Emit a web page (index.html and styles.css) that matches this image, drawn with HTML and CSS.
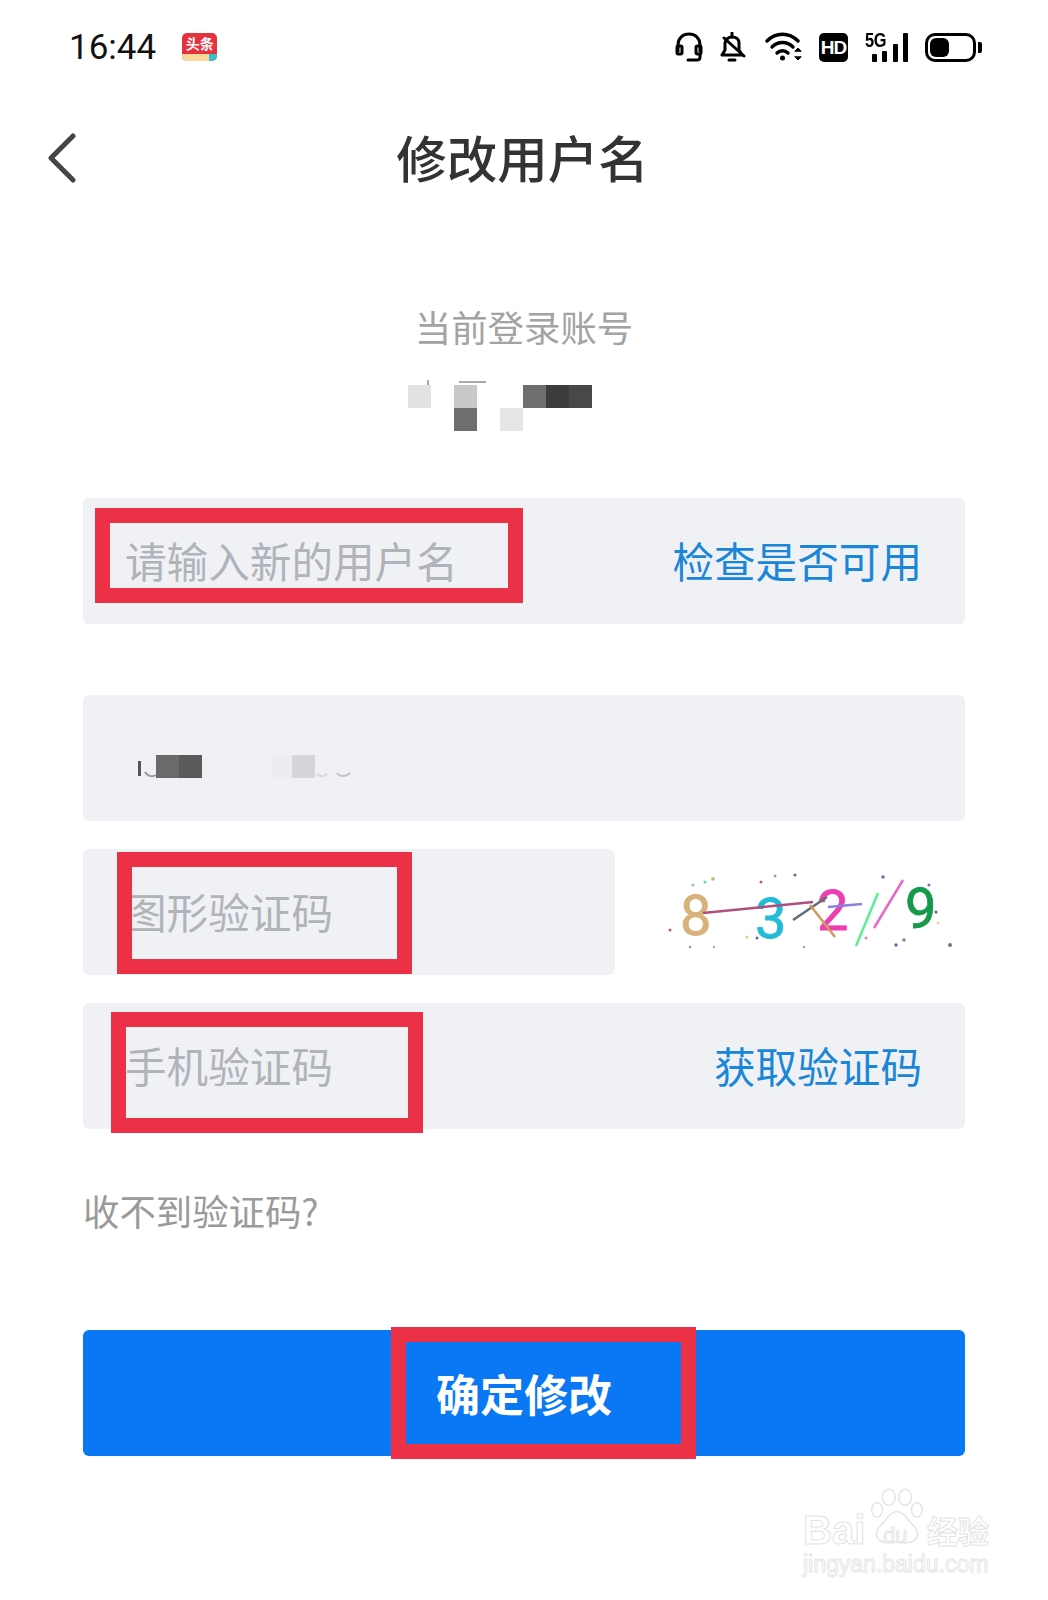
FILE: index.html
```html
<!DOCTYPE html>
<html lang="zh-CN">
<head>
  <meta charset="utf-8">
  <title>修改用户名</title>
  <link rel="stylesheet" href="styles.css">
</head>
<body>
  <!-- Status bar -->
  <div class="statusbar">
    <div class="status-left">
      <span class="time">16:44</span>
      <div class="app-badge">
        <span class="app-name">头条</span>
        <span class="app-strip"></span>
      </div>
    </div>
    <div class="status-icons">
      <svg width="28" height="30" viewBox="0 0 28 30" fill="none" stroke="#000" stroke-width="3">
        <path d="M3 20V13C3 6 8 2 14 2S25 6 25 13V20"/>
        <rect x="2" y="14" width="5" height="8" rx="1.5"/>
        <rect x="21" y="14" width="5" height="8" rx="1.5"/>
        <path d="M25 22V25C25 27 24 28 22 28H13" stroke-linecap="round"/>
      </svg>
      <svg width="28" height="30" viewBox="0 0 28 30" fill="none" stroke="#000" stroke-width="3">
        <path d="M2 23H22L19 18V11C19 7 16 5 12 5S6 7 5 11V18Z" stroke-linejoin="round"/>
        <path d="M12 1V5" stroke-linecap="round"/>
        <path d="M9 28H15" stroke-linecap="round"/>
        <path d="M4 6L24 24" stroke-linecap="round"/>
      </svg>
      <svg width="37" height="30" viewBox="0 0 37 30" fill="none" stroke="#000" stroke-width="3.4" stroke-linecap="round">
        <path d="M2 9C11 0 24 0 33 9"/>
        <path d="M7 15C13 9 22 9 28 15"/>
        <path d="M12 21C15 18 20 18 23 21"/>
        <circle cx="17.500" cy="26" r="2.500" fill="#000" stroke="none"/>
        <path d="M30 19L33 16L36 19Z" fill="#000" stroke-width="1"/>
        <path d="M30 25L33 28L36 25Z" fill="#000" stroke-width="1"/>
      </svg>
      <div class="hd-icon">HD</div>
      <div class="signal">
        <span class="five-g">5G</span>
        <div class="bars">
          <span class="bar bar-1"></span>
          <span class="bar bar-2"></span>
          <span class="bar bar-3"></span>
          <span class="bar bar-4"></span>
        </div>
      </div>
      <div class="battery">
        <div class="battery-body"><span class="battery-level"></span></div>
        <span class="battery-tip"></span>
      </div>
    </div>
  </div>

  <!-- Title -->
  <div class="header">
    <svg class="back" width="30" height="50" viewBox="0 0 30 50" fill="none" stroke="#444" stroke-width="5" stroke-linecap="round" stroke-linejoin="round">
      <path d="M25 3L3 25L25 47"/>
    </svg>
    <h1>修改用户名</h1>
  </div>

  <div class="main">
    <div class="account-label">当前登录账号</div>

    <!-- Blurred account number -->
    <div class="mosaic">
      <span class="cell c-e2 tick-dot"></span><span class="cell"></span><span class="cell c-c8 tick-line"></span><span class="cell"></span><span class="cell"></span><span class="cell c-6e"></span><span class="cell c-3c"></span><span class="cell c-48"></span>
      <span class="cell"></span><span class="cell"></span><span class="cell c-6e"></span><span class="cell"></span><span class="cell c-e6"></span><span class="cell"></span><span class="cell"></span><span class="cell"></span>
    </div>

    <div class="field field-first">
      <span class="placeholder">请输入新的用户名</span>
      <span class="link">检查是否可用</span>
      <div class="mark mark-name"></div>
    </div>

    <div class="field field-phone">
      <svg class="phone-blur" width="240" height="36" viewBox="0 0 240 36">
        <rect x="28" y="12" width="23" height="23" fill="#6a6a6a"/>
        <rect x="51" y="12" width="23" height="23" fill="#5a5a5a"/>
        <rect x="143" y="12" width="21" height="23" fill="#ecedf0"/>
        <rect x="164" y="12" width="23" height="23" fill="#d5d6da"/>
        <rect x="10" y="18" width="3" height="15" fill="#555"/>
        <path d="M17 29C20 34 25 34 28 32" fill="none" stroke="#999" stroke-width="2"/>
        <path d="M189 31C192 34 196 34 199 31" fill="none" stroke="#d8d8dc" stroke-width="2"/>
        <path d="M209 30C212 34 218 34 222 30" fill="none" stroke="#c4c4c8" stroke-width="2"/>
      </svg>
    </div>

    <div class="captcha-row">
      <div class="field field-captcha">
        <span class="placeholder">图形验证码</span>
        <div class="mark mark-captcha"></div>
      </div>
      <svg class="captcha" width="325" height="126" viewBox="0 0 325 126">
        <g class="captcha-art">
          <text x="40" y="86" class="digit" fill="#d8b27a" stroke="#d8b27a">8</text>
          <text x="115" y="89" class="digit" fill="#22bcd8" stroke="#22bcd8">3</text>
          <text x="177" y="81" class="digit" fill="#ee3fb0" stroke="#ee3fb0">2</text>
          <text x="265" y="79" class="digit" fill="#159a4c" stroke="#159a4c">9</text>
          <g fill="none" stroke-width="2.500">
            <path d="M63 64L173 53" stroke="#b0507a"/>
            <path d="M153 71L187 48" stroke="#607070"/>
            <path d="M170 56L195 88" stroke="#d09a5f"/>
            <path d="M188 58L222 55" stroke="#8a80e0"/>
            <path d="M216 97L238 44" stroke="#5cef90"/>
            <path d="M234 79L263 31" stroke="#e868c8"/>
          </g>
          <g>
            <circle cx="30" cy="81" r="1.500" fill="#b06080"/>
            <circle cx="53" cy="36" r="1.500" fill="#8ac0e0"/>
            <circle cx="65" cy="33" r="1.500" fill="#70d0d0"/>
            <circle cx="73" cy="30" r="1.800" fill="#c8b080"/>
            <circle cx="121" cy="33" r="1.500" fill="#b06090"/>
            <circle cx="135" cy="27" r="1.500" fill="#80b0a0"/>
            <circle cx="155" cy="26" r="1.500" fill="#606870"/>
            <circle cx="243" cy="28" r="1.800" fill="#7070a0"/>
            <circle cx="289" cy="36" r="1.500" fill="#7070b0"/>
            <circle cx="296" cy="63" r="1.500" fill="#606070"/>
            <circle cx="298" cy="74" r="1.500" fill="#e0d890"/>
            <circle cx="107" cy="88" r="1.500" fill="#c0e090"/>
            <circle cx="117" cy="89" r="1.500" fill="#606890"/>
            <circle cx="226" cy="89" r="1.500" fill="#d09090"/>
            <circle cx="256" cy="96" r="1.800" fill="#6070c0"/>
            <circle cx="264" cy="91" r="1.800" fill="#809080"/>
            <circle cx="310" cy="96" r="2" fill="#707880"/>
            <circle cx="50" cy="98" r="1.200" fill="#909090"/>
            <circle cx="74" cy="98" r="1.200" fill="#b0b0b0"/>
            <circle cx="164" cy="98" r="1.200" fill="#a0a0a0"/>
          </g>
        </g>
      </svg>
    </div>

    <div class="field field-sms">
      <span class="placeholder">手机验证码</span>
      <span class="link">获取验证码</span>
      <div class="mark mark-sms"></div>
    </div>

    <div class="help">收不到验证码?</div>

    <div class="submit">
      确定修改
      <div class="mark mark-submit"></div>
    </div>
  </div>

  <!-- Watermark -->
  <div class="watermark">
    <div class="wm-top">
      <span class="wm-bai">Bai</span>
      <svg class="wm-paw" width="56" height="60" viewBox="0 0 62 66" fill="none" stroke="#e4e4e4" stroke-width="1.500">
        <ellipse cx="9" cy="24" rx="6" ry="8"/>
        <ellipse cx="22" cy="10" rx="7" ry="9"/>
        <ellipse cx="40" cy="10" rx="7" ry="9"/>
        <ellipse cx="53" cy="24" rx="6" ry="8"/>
        <path d="M31 26C22 26 20 36 12 42C4 50 10 62 22 60C28 59 34 59 40 60C52 62 58 50 50 42C42 36 40 26 31 26Z"/>
      </svg>
      <span class="wm-du">du</span>
      <span class="wm-cn">经验</span>
    </div>
    <div class="wm-url">jingyan.baidu.com</div>
  </div>
</body>
</html>
```

FILE: styles.css
```css
* {
  box-sizing: border-box;
}
body {
  margin: 0;
  width: 1048px;
  height: 1600px;
  position: relative;
  overflow: hidden;
  background: #fff;
  font-family: "Noto Sans CJK SC", "Noto Sans", sans-serif;
}

/* status bar */
.statusbar {
  height: 94px;
  padding: 0 66px 0 69px;
  display: flex;
  justify-content: space-between;
  align-items: center;
}
.status-left {
  display: flex;
  align-items: center;
  gap: 26px;
}
.time {
  font-family: Roboto, sans-serif;
  font-size: 35px;
  color: #111;
}
.app-badge {
  width: 35px;
  height: 28px;
  border-radius: 5px;
  overflow: hidden;
  background: #e5323f;
  display: flex;
  flex-direction: column;
  align-items: center;
}
.app-name {
  flex: 1;
  font-size: 14px;
  line-height: 21px;
  font-weight: 700;
  color: #fff;
}
.app-strip {
  width: 100%;
  height: 7px;
  background: linear-gradient(to right, #fbd79a 76%, #38c0c8 76%);
}
.status-icons {
  display: flex;
  align-items: center;
  gap: 17px;
}
.hd-icon {
  width: 29px;
  height: 29px;
  border-radius: 5px;
  background: #000;
  color: #fff;
  font-family: "Liberation Sans", sans-serif;
  font-size: 19px;
  font-weight: 700;
  line-height: 29px;
  text-align: center;
  letter-spacing: -1px;
}
.signal {
  width: 43px;
  height: 30px;
  display: flex;
  position: relative;
  justify-content: flex-end;
}
.five-g {
  position: absolute;
  left: 0;
  top: -2px;
  font-family: "Liberation Sans", sans-serif;
  font-size: 20px;
  font-weight: 700;
  line-height: 20px;
  letter-spacing: -0.5px;
  color: #000;
  transform: scaleX(0.82);
  transform-origin: left;
}
.bars {
  display: flex;
  align-items: flex-end;
  gap: 5.5px;
  height: 30px;
}
.bar {
  width: 5px;
  background: #000;
  border-radius: 1px;
}
.bar-1 { height: 8px; }
.bar-2 { height: 11px; }
.bar-3 { height: 18px; }
.bar-4 { height: 29px; }
.battery {
  display: flex;
  align-items: center;
  gap: 2px;
}
.battery-body {
  width: 51px;
  height: 29px;
  border: 3px solid #000;
  border-radius: 10px;
  padding: 2px;
}
.battery-level {
  display: block;
  width: 19px;
  height: 100%;
  background: #000;
  border-radius: 6px;
}
.battery-tip {
  width: 4px;
  height: 11px;
  background: #000;
  border-radius: 0 2px 2px 0;
}

/* title */
.header {
  height: 128px;
  padding-left: 48px;
  display: grid;
  grid-template-columns: 1fr auto 1fr;
  align-items: center;
}
.back {
  display: block;
}
h1 {
  margin: 0 0 4px;
  padding-right: 51px;
  font-size: 50.5px;
  line-height: 60px;
  font-weight: 500;
  color: #333;
}

.main {
  padding: 81px 83px 0;
}
.account-label {
  height: 50px;
  font-size: 36.4px;
  line-height: 46px;
  color: #a3a3a3;
  text-align: center;
}
.mosaic {
  width: 184px;
  margin: 32px 0 0 325px;
  display: grid;
  grid-template-columns: repeat(8, 23px);
  grid-auto-rows: 23px;
}
.cell {
  position: relative;
}
.c-e2 { background: #e2e2e2; }
.c-c8 { background: #c8c8c8; }
.c-6e { background: #6e6e6e; }
.c-3c { background: #3c3c3c; }
.c-48 { background: #484848; }
.c-e6 { background: #e6e6e6; }
/* stray bits of the digits left outside the pixelation */
.tick-dot::after {
  content: "";
  position: absolute;
  left: 19px;
  top: -5px;
  width: 2px;
  height: 5px;
  background: #aaa;
}
.tick-line::after {
  content: "";
  position: absolute;
  left: 5px;
  top: -4px;
  width: 27px;
  height: 2px;
  background: #aaa;
}

/* form fields */
.field {
  height: 126px;
  padding: 0 43px 2px 42px;
  position: relative;
  display: flex;
  align-items: center;
  justify-content: space-between;
  background: #f0f1f5;
  border-radius: 6px;
}
.field-first {
  margin-top: 67px;
}
.field-phone {
  margin-top: 71px;
  padding-left: 45px;
  padding-top: 6px;
  padding-bottom: 0;
  justify-content: flex-start;
}
.phone-blur {
  display: block;
}
.captcha-row {
  margin-top: 28px;
  display: flex;
  gap: 25px;
}
.field-captcha {
  width: 532px;
  flex: none;
}
.field-sms {
  margin-top: 28px;
}
.placeholder {
  font-size: 41.6px;
  line-height: 60px;
  color: #b0b4ba;
}
.link {
  font-size: 41.6px;
  line-height: 60px;
  color: #1a86d8;
}
.captcha {
  flex: none;
  display: block;
}
.captcha-art {
  filter: blur(0.6px);
}
.digit {
  font-family: Roboto, sans-serif;
  font-size: 56px;
  stroke-width: 0.8px;
}
.help {
  height: 50px;
  margin-top: 58px;
  font-size: 36.4px;
  line-height: 46px;
  color: #9a9a9a;
}
.submit {
  height: 126px;
  margin-top: 93px;
  position: relative;
  background: #0a78f5;
  border-radius: 6px;
  color: #fff;
  font-size: 44px;
  font-weight: 700;
  line-height: 126px;
  text-align: center;
}

/* red annotations drawn over the screenshot */
.mark {
  position: absolute;
  border: 15px solid #ec3046;
}
.mark-name {
  left: 12px;
  top: 10px;
  width: 428px;
  height: 95px;
}
.mark-captcha {
  left: 34px;
  top: 3px;
  width: 295px;
  height: 122px;
}
.mark-sms {
  left: 28px;
  top: 9px;
  width: 312px;
  height: 121px;
}
.mark-submit {
  left: 308px;
  top: -3px;
  width: 305px;
  height: 132px;
}

/* watermark */
.watermark {
  position: absolute;
  left: 803px;
  top: 1487px;
  width: 190px;
}
.wm-top {
  position: relative;
  height: 62px;
  font-family: "Liberation Sans", sans-serif;
}
.wm-bai {
  position: absolute;
  left: 0;
  top: 23px;
  font-size: 40px;
  line-height: 40px;
  font-weight: 700;
  color: #fff;
  -webkit-text-stroke: 1px #e4e4e4;
}
.wm-paw {
  position: absolute;
  left: 66px;
  top: 1px;
}
.wm-du {
  position: absolute;
  left: 80px;
  top: 38px;
  font-size: 22px;
  line-height: 22px;
  color: #fff;
  -webkit-text-stroke: 1px #e4e4e4;
}
.wm-cn {
  position: absolute;
  left: 124px;
  top: 25px;
  font-family: "Noto Sans CJK SC", sans-serif;
  font-size: 31px;
  line-height: 36px;
  font-weight: 700;
  color: #fff;
  -webkit-text-stroke: 1px #e4e4e4;
}
.wm-url {
  margin-top: 2px;
  font-family: "Liberation Sans", sans-serif;
  font-size: 23px;
  line-height: 26px;
  color: #fff;
  -webkit-text-stroke: 1px #e6e6e6;
  white-space: nowrap;
}
```
